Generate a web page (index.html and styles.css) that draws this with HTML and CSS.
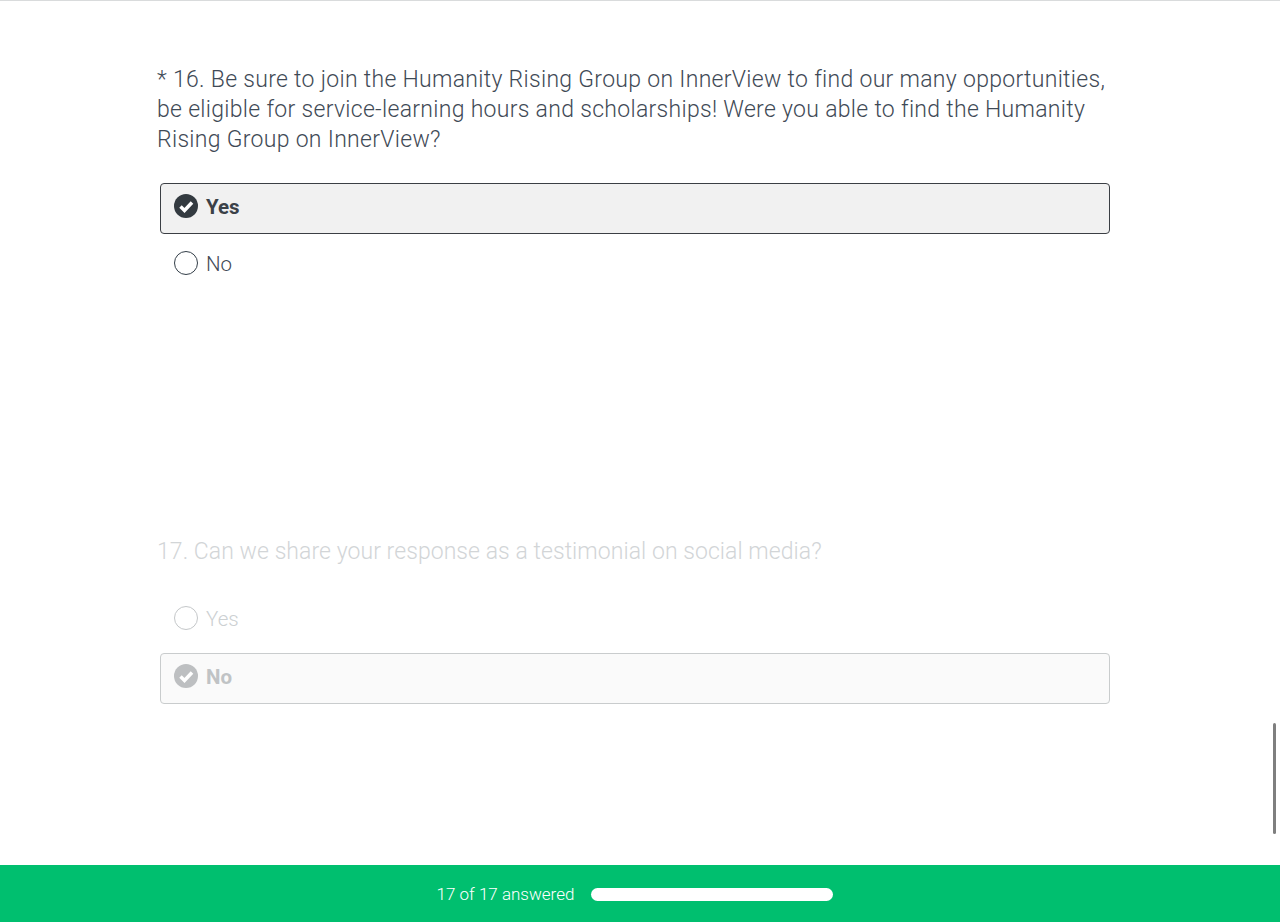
FILE: index.html
```html
<!DOCTYPE html>
<html lang="en">
<head>
<meta charset="utf-8">
<title>Survey</title>
<link rel="stylesheet" href="styles.css">
</head>
<body>
<main class="survey">
  <section class="question q16">
    <h2 class="title">* 16. Be sure to join the Humanity Rising Group on InnerView to find our many opportunities, be eligible for service-learning hours and scholarships! Were you able to find the Humanity Rising Group on InnerView?</h2>
    <div class="options">
      <div class="option selected">
        <svg class="check" viewBox="0 0 24 24"><circle cx="12" cy="12" r="12" fill="currentColor"/><path d="M6.500 12.500l4 4 7.500-8" fill="none" stroke="#fff" stroke-width="3.500"/></svg>
        <span>Yes</span>
      </div>
      <div class="option">
        <span class="radio"></span>
        <span>No</span>
      </div>
    </div>
  </section>
  <section class="question q17 disabled">
    <h2 class="title">17. Can we share your response as a testimonial on social media?</h2>
    <div class="options">
      <div class="option">
        <span class="radio"></span>
        <span>Yes</span>
      </div>
      <div class="option selected">
        <svg class="check" viewBox="0 0 24 24"><circle cx="12" cy="12" r="12" fill="currentColor"/><path d="M6.500 12.500l4 4 7.500-8" fill="none" stroke="#fff" stroke-width="3.500"/></svg>
        <span>No</span>
      </div>
    </div>
  </section>
</main>
<div class="scrollbar"></div>
<footer class="progress">
  <span class="progress-label">17 of 17 answered</span>
  <div class="progress-bar"></div>
</footer>
</body>
</html>
```

FILE: styles.css
```css
* { box-sizing: border-box; }
html, body { margin: 0; height: 100%; overflow: hidden; }
body {
  display: flex;
  flex-direction: column;
  height: 922px;
  background: #fff;
  font-family: Roboto, "Liberation Sans", sans-serif;
  color: #3f4a56;
  border-top: 1px solid #d9dbdc;
}
.survey { flex: 1; padding: 64px 170px 0 157px; }
.title {
  margin: 0;
  font-size: 23px;
  line-height: 30px;
  font-weight: 300;
  letter-spacing: 0.06px;
  color: #3f4a56;
}
.q16 .title { letter-spacing: 0.3px; margin-right: -4px; }
.options { margin: 28px 0 0 3px; display: flex; flex-direction: column; }
.option {
  display: flex;
  align-items: flex-start;
  gap: 8px;
  height: 51px;
  padding: 10px 13px;
  font-size: 20.500px;
  line-height: 26px;
  font-weight: 300;
  color: #3f4a56;
  border: 1px solid transparent;
  border-radius: 4px;
}
.option.selected {
  background: #f1f1f1;
  border-color: #3b3f44;
  font-weight: 700;
  color: #3b4148;
}
.option:not(.selected) { height: 58px; padding-top: 16px; }
.check, .radio { flex: none; width: 24px; height: 24px; }
.radio { border: 1.500px solid #333e48; border-radius: 50%; background: #fff; }
.check { color: #333a40; }
.q16 { height: 472px; }
.disabled .title { color: #d2d5d7; }
.disabled .option { color: #ccd0d2; }
.disabled .radio { border-color: #c4c7c9; }
.disabled .option.selected { background: #fafafa; border-color: #c9cccd; color: #c0c3c5; }
.disabled .check { color: #bdbfc1; }
.q17 .options { margin-top: 20px; }
.q17 .option:not(.selected) { height: 66px; padding-top: 18px; }
.scrollbar {
  position: absolute;
  right: 4px;
  top: 723px;
  width: 3px;
  height: 111px;
  background: #7f7f7f;
  border-radius: 2px;
}
.progress {
  flex: none;
  height: 57px;
  background: #00bf6f;
  color: #fff;
  display: flex;
  align-items: center;
  justify-content: center;
  gap: 17px;
  padding-right: 10px;
  font-size: 17px;
  font-weight: 300;
}
.progress-bar { width: 242px; height: 13px; margin-top: 2px; background: #fff; border-radius: 7px; }
```
